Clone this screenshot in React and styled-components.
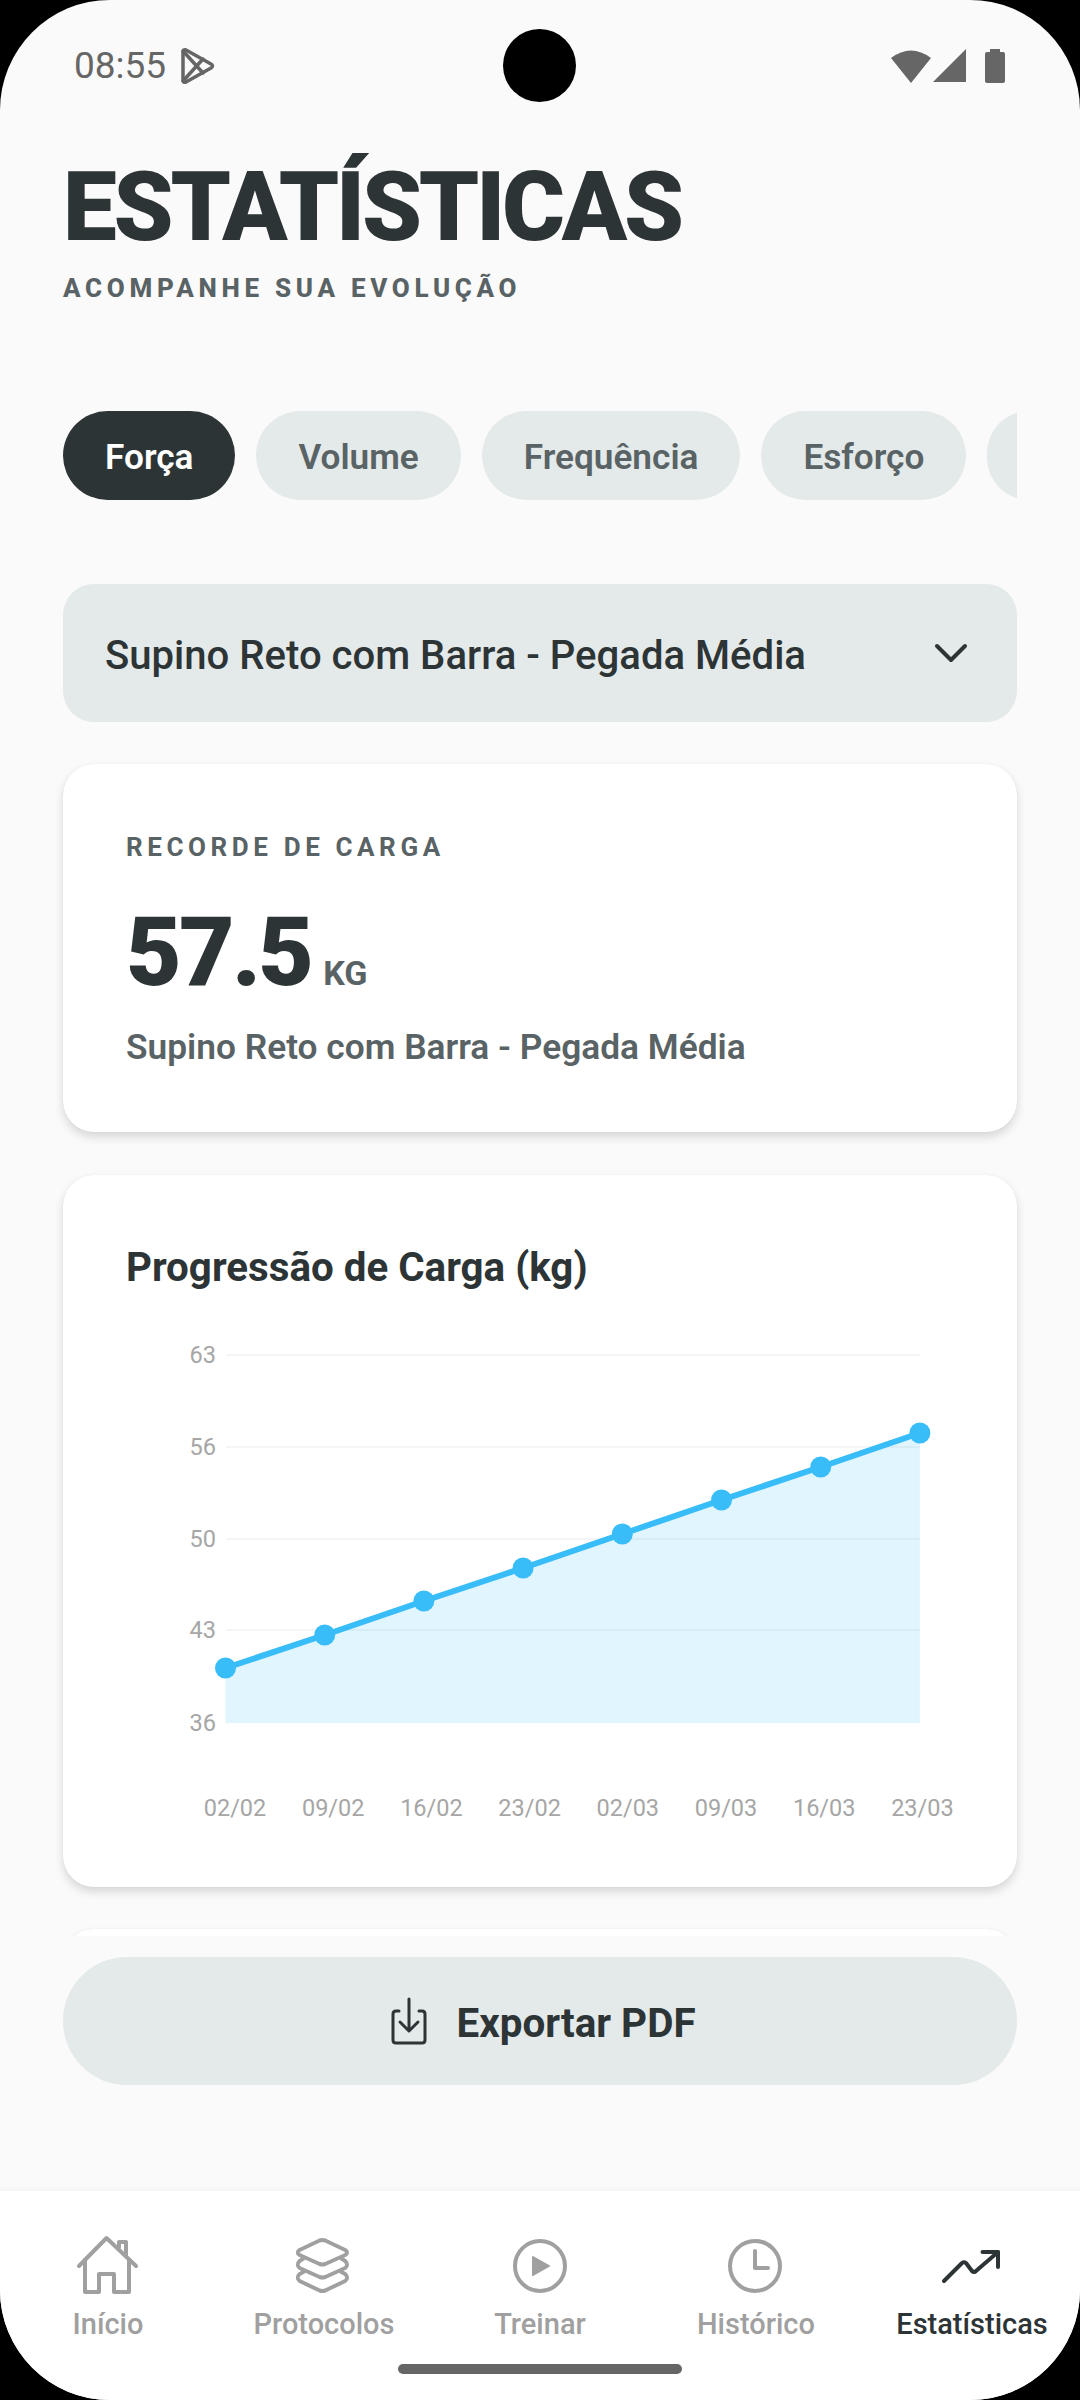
import React from 'react'
import styled, { createGlobalStyle } from 'styled-components'

const Global = createGlobalStyle`
  html, body { margin: 0; padding: 0; background: #000; }
  * { box-sizing: border-box; }
`

const Screen = styled.div`
  position: relative;
  width: 1080px;
  height: 2400px;
  background: #fafafa;
  border-radius: 110px;
  overflow: hidden;
  display: flex;
  flex-direction: column;
  font-family: Roboto, "Noto Sans", sans-serif;
  color: #2d3436;
`

const StatusBar = styled.div`
  height: 132px;
  flex-shrink: 0;
  padding: 0 75px 0 74px;
  display: flex;
  align-items: center;
  justify-content: space-between;
  color: #666;
`
const StatusLeft = styled.div`
  display: flex;
  align-items: center;
  gap: 14px;
  font-size: 37px;
  line-height: 42px;
`
const StatusRight = styled.div`
  display: flex;
  align-items: center;
`
const Camera = styled.div`
  position: absolute;
  top: 29px;
  left: 503px;
  width: 73px;
  height: 73px;
  border-radius: 50%;
  background: #000;
`

const Header = styled.header`
  padding: 0 63px;
  flex-shrink: 0;
`
const Title = styled.h1`
  margin: 0;
  font-size: 96px;
  line-height: 112px;
  font-weight: 900;
  letter-spacing: -3.2px;
  margin-top: 19px;
`
const Subtitle = styled.div`
  margin-top: 10px;
  font-size: 26px;
  line-height: 30px;
  font-weight: 800;
  letter-spacing: 4.7px;
  color: #596365;
`

const Chips = styled.div`
  margin: 108px 63px 0;
  display: flex;
  gap: 21px;
  overflow: hidden;
  flex-shrink: 0;
`
const Chip = styled.div`
  flex-shrink: 0;
  height: 89px;
  min-width: 84px;
  padding: 2px 42px 0;
  border-radius: 45px;
  display: flex;
  align-items: center;
  font-size: 35.2px;
  font-weight: 600;
  background: ${p => (p.$active ? '#2d3436' : '#e4e9e9')};
  color: ${p => (p.$active ? '#fff' : '#596365')};
`

const Scroll = styled.div`
  margin-top: 84px;
  height: 1352px;
  padding: 0 63px;
  overflow: hidden;
  flex-shrink: 0;
`
const Select = styled.div`
  height: 138px;
  padding: 0 49px 0 42px;
  border-radius: 31px;
  background: #e4e9e9;
  display: flex;
  align-items: center;
  justify-content: space-between;
  font-size: 40.1px;
  font-weight: 500;
  margin-bottom: 42px;
`
const SelectText = styled.span`
  padding-top: 4px;
`
const Card = styled.section`
  background: #fff;
  border-radius: 31px;
  padding: 0 63px;
  margin-bottom: ${p => p.$gap}px;
  height: ${p => p.$h}px;
  box-shadow: 0 0 1px rgba(0, 0, 0, 0.1), 0 5px 10px rgba(0, 0, 0, 0.14);
`
const RecordLabel = styled.div`
  padding-top: 68px;
  font-size: 26px;
  line-height: 30px;
  font-weight: 700;
  letter-spacing: 4.6px;
  color: #596365;
`
const RecordValue = styled.div`
  margin-top: 42px;
  display: flex;
  align-items: baseline;
  gap: 12px;
  font-size: 96px;
  line-height: 96px;
  font-weight: 900;
  letter-spacing: -2.7px;
`
const RecordUnit = styled.span`
  font-size: 34px;
  font-weight: 700;
  letter-spacing: 0;
  color: #596365;
`
const RecordName = styled.div`
  margin-top: 6px;
  font-size: 35.3px;
  line-height: 40px;
  font-weight: 600;
  color: #596365;
`
const ChartTitle = styled.h2`
  margin: 0;
  padding-top: 70px;
  font-size: 40.3px;
  line-height: 46px;
  font-weight: 700;
`
const ChartSvg = styled.svg`
  display: block;
  margin: 39px -63px 0;
  overflow: visible;
`
const AxisText = styled.text`
  font-family: Roboto, sans-serif;
  font-size: 23.5px;
  fill: #a6a6a6;
`

const ExportButton = styled.button`
  margin: 21px 63px 0;
  height: 128px;
  padding: 0 0 0 7px;
  flex-shrink: 0;
  border: 0;
  border-radius: 64px;
  background: #e4e9e9;
  color: #2d3436;
  display: flex;
  align-items: center;
  justify-content: center;
  gap: 29px;
  font-family: inherit;
  font-size: 40.4px;
  font-weight: 700;
`
const ExportText = styled.span`
  padding-top: 5px;
`

const Nav = styled.nav`
  margin-top: auto;
  height: 209px;
  flex-shrink: 0;
  background: #fff;
  box-shadow: 0 -2px 6px rgba(0, 0, 0, 0.03);
  display: grid;
  grid-template-columns: repeat(5, 216px);
  position: relative;
`
const NavItem = styled.div`
  padding-top: 43px;
  display: flex;
  flex-direction: column;
  align-items: center;
  font-size: 29px;
  line-height: 34px;
  font-weight: 500;
  color: ${p => (p.$active ? '#2d3436' : '#a0a0a0')};
`
const NavIcon = styled.svg`
  display: block;
  width: 64px;
  height: 64px;
  margin-bottom: 9px;
  fill: none;
  stroke: currentColor;
  stroke-width: 4;
  stroke-linecap: round;
  stroke-linejoin: round;
`
const HomeBar = styled.div`
  position: absolute;
  left: 398px;
  bottom: 26px;
  width: 284px;
  height: 10px;
  border-radius: 5px;
  background: #666;
`

// chart coordinates are page pixels, shifted by the svg origin
const X0 = 63
const Y0 = 1330
const grid = [[63, 1355], [56, 1447], [50, 1539], [43, 1630], [36, 1723]]
const points = [1668, 1635, 1601, 1568, 1534, 1500, 1467, 1433].map((y, i) => [225.5 + i * 99.2 - X0, y - Y0])
const dates = ['02/02', '09/02', '16/02', '23/02', '02/03', '09/03', '16/03', '23/03']
const line = points.map(p => p.join(',')).join(' ')
const base = 1723 - Y0

function Chart() {
  return (
    <ChartSvg width="954" height="510" viewBox="0 0 954 510">
      {grid.slice(0, 4).map(([v, y]) => (
        <line key={v} x1={226 - X0} x2={920 - X0} y1={y - Y0} y2={y - Y0} stroke="#f5f5f5" strokeWidth="2" />
      ))}
      {grid.map(([v, y]) => (
        <AxisText key={v} x={216 - X0} y={y - Y0 + 8} textAnchor="end">{v}</AxisText>
      ))}
      <polygon points={`${points[0].join(',')} ${line} ${points[7][0]},${base} ${points[0][0]},${base}`} fill="#38bdf8" fillOpacity="0.15" />
      <polyline points={line} fill="none" stroke="#38bdf8" strokeWidth="6" />
      {points.map(([x, y]) => (
        <circle key={x} cx={x} cy={y} r="10.5" fill="#38bdf8" />
      ))}
      {dates.map((d, i) => (
        <AxisText key={d} x={235 + i * 98.2 - X0} y={1816 - Y0} textAnchor="middle">{d}</AxisText>
      ))}
    </ChartSvg>
  )
}

const PlayStore = () => (
  <svg width="36" height="38" viewBox="0 0 36 38" fill="none" stroke="#666" strokeWidth="3.5" strokeLinejoin="round" strokeLinecap="round">
    <path d="M3 5 Q3 2 6 3 L31 17 Q34 19 31 21 L6 35 Q3 36 3 33 Z" />
    <path d="M3 4 L23 26 M3 34 L23 12" />
  </svg>
)

const Wifi = () => (
  <svg width="40" height="34" viewBox="0 0 40 34" fill="#666" style={{ marginRight: 2 }}>
    <path d="M0 9 Q20 -6 40 9 L20 34 Z" />
  </svg>
)
const Signal = () => (
  <svg width="33" height="34" viewBox="0 0 33 34" fill="#666" style={{ marginRight: 19 }}>
    <path d="M33 0 V33 H0 Z" />
  </svg>
)
const Battery = () => (
  <svg width="20" height="34" viewBox="0 0 20 34" fill="#666">
    <path d="M5 0 H15 V3 H18 Q20 3 20 5 V32 Q20 34 18 34 H2 Q0 34 0 32 V5 Q0 3 2 3 H5 Z" />
  </svg>
)

const Chevron = () => (
  <svg width="34" height="20" viewBox="0 0 34 20" fill="none" stroke="#2d3436" strokeWidth="4" strokeLinecap="round" strokeLinejoin="round">
    <path d="M3 3 L17 17 L31 3" />
  </svg>
)

const DownloadIcon = () => (
  <svg width="36" height="48" viewBox="0 0 36 48" fill="none" stroke="#2d3436" strokeWidth="3" strokeLinecap="round" strokeLinejoin="round">
    <path d="M18 2 V34 M9 25 L18 34 L27 25" />
    <path d="M8 14 H5 Q2 14 2 17 V43 Q2 46 5 46 H31 Q34 46 34 43 V17 Q34 14 31 14 H28" />
  </svg>
)

const tabs = [
  {
    label: 'Início',
    icon: (
      <>
        <path d="M3 32 L30.5 4 L60 32" />
        <path d="M9 26 V58 H23 V40 H38 V58 H53 V26" />
        <path d="M43 13 V8 H50 V22" />
      </>
    ),
  },
  {
    label: 'Protocolos',
    icon: (
      <g transform="scale(0.95 1)">
        <path d="M8 16 L29 6.5 Q32 5.5 35 6.5 L56 16 Q60 18.5 56 21 L35 30 Q32 31 29 30 L8 21 Q4 18.5 8 16 Z" />
        <path d="M12 24.5 L8 27 Q4 31 8 34 L29 43 Q32 44 35 43 L56 34 Q60 31 56 27 L52 24.5" />
        <path d="M12 38 L8 40 Q4 44 8 47 L29 56.5 Q32 57.5 35 56.5 L56 47 Q60 44 56 40 L52 38" />
      </g>
    ),
  },
  {
    label: 'Treinar',
    icon: (
      <>
        <circle cx="32" cy="32" r="25" />
        <path d="M25 23 L41 32 L25 41 Z" fill="currentColor" strokeWidth="2" />
      </>
    ),
  },
  {
    label: 'Histórico',
    icon: (
      <>
        <circle cx="31" cy="32" r="25" />
        <path d="M31 17 V34 H44" />
      </>
    ),
  },
  {
    label: 'Estatísticas',
    active: true,
    icon: (
      <>
        <path d="M4 47 L22 29 Q24 27.5 26 29 L32 37 Q34 39 36 37 L58 18" />
        <path d="M42.5 18 H58 V33" />
      </>
    ),
  },
]

export default function App() {
  return (
    <Screen>
      <Global />
      <Camera />
      <StatusBar>
        <StatusLeft>
          08:55
          <PlayStore />
        </StatusLeft>
        <StatusRight>
          <Wifi />
          <Signal />
          <Battery />
        </StatusRight>
      </StatusBar>

      <Header>
        <Title>ESTATÍSTICAS</Title>
        <Subtitle>ACOMPANHE SUA EVOLUÇÃO</Subtitle>
      </Header>

      <Chips>
        <Chip $active>Força</Chip>
        <Chip>Volume</Chip>
        <Chip>Frequência</Chip>
        <Chip>Esforço</Chip>
        <Chip />
      </Chips>

      <Scroll>
        <Select>
          <SelectText>Supino Reto com Barra - Pegada Média</SelectText>
          <Chevron />
        </Select>
        <Card $h={368} $gap={43}>
          <RecordLabel>RECORDE DE CARGA</RecordLabel>
          <RecordValue>
            57.5
            <RecordUnit>KG</RecordUnit>
          </RecordValue>
          <RecordName>Supino Reto com Barra - Pegada Média</RecordName>
        </Card>
        <Card $h={712} $gap={42}>
          <ChartTitle>Progressão de Carga (kg)</ChartTitle>
          <Chart />
        </Card>
        <Card $h={300} $gap={42} />
      </Scroll>

      <ExportButton>
        <DownloadIcon />
        <ExportText>Exportar PDF</ExportText>
      </ExportButton>

      <Nav>
        {tabs.map(t => (
          <NavItem key={t.label} $active={t.active}>
            <NavIcon viewBox="0 0 64 64">{t.icon}</NavIcon>
            {t.label}
          </NavItem>
        ))}
        <HomeBar />
      </Nav>
    </Screen>
  )
}
